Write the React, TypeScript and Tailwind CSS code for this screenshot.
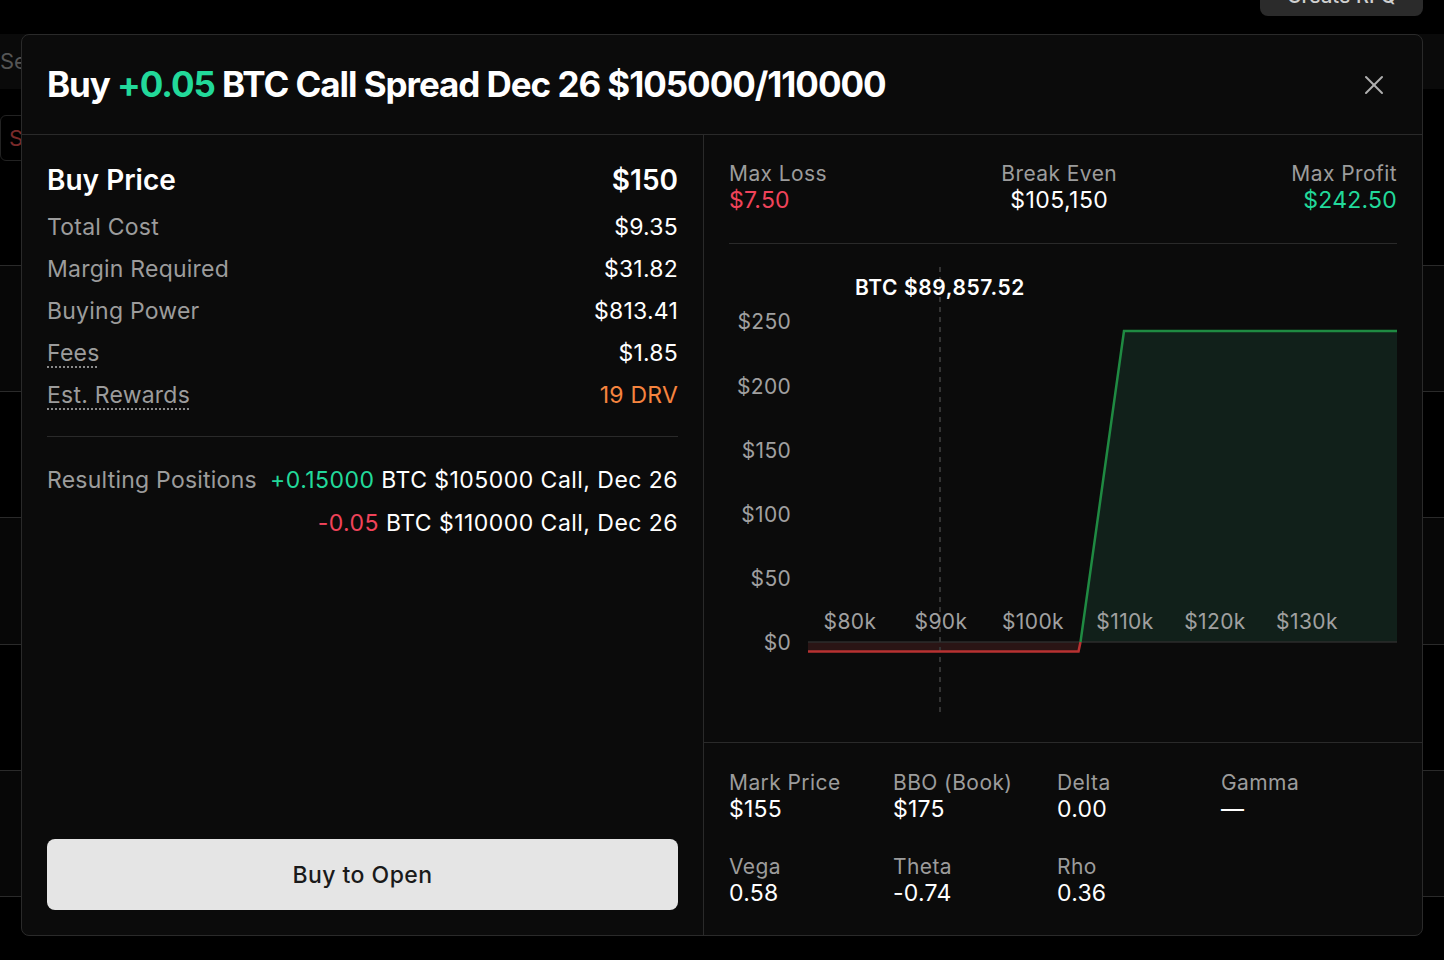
import { X } from "lucide-react";

function Row({ label, value, dotted, valueClass }: { label: string; value: string; dotted?: boolean; valueClass?: string }) {
  return (
    <div className="flex h-[42px] items-center justify-between">
      <span
        className={
          "text-[#9c9c9c] " +
          (dotted ? "underline decoration-dotted decoration-[#8a8a8a] decoration-2 underline-offset-[6px]" : "")
        }
      >
        {label}
      </span>
      <span className={valueClass ?? "text-white"}>{value}</span>
    </div>
  );
}

function Stat({ label, value }: { label: string; value: string }) {
  return (
    <div className="flex flex-col leading-[27px]">
      <span className="text-[21px] tracking-[0.02em] text-[#9c9c9c]">{label}</span>
      <span className="text-[23px] tracking-[0.01em] text-white">{value}</span>
    </div>
  );
}

function Chart() {
  const yLabels = [
    { t: "$250", y: 84 },
    { t: "$200", y: 149 },
    { t: "$150", y: 213 },
    { t: "$100", y: 277 },
    { t: "$50", y: 341 },
    { t: "$0", y: 405 },
  ];
  const xLabels = [
    { t: "$80k", x: 146 },
    { t: "$90k", x: 237 },
    { t: "$100k", x: 329 },
    { t: "$110k", x: 421 },
    { t: "$120k", x: 511 },
    { t: "$130k", x: 603 },
  ];
  return (
    <svg width="718" height="499" viewBox="0 0 718 499" className="block">
      <path d="M376 398 L420 87 H693 V398 Z" fill="#11201a" />
      <rect x="104" y="398" width="272" height="9.5" fill="#2a1515" />
      <line x1="104" y1="398" x2="693" y2="398" stroke="#2c2c2c" strokeWidth="1.5" />
      <line x1="236" y1="23" x2="236" y2="472" stroke="#333" strokeWidth="2" strokeDasharray="5 5" />
      <path d="M104 407.5 H374.5 L376.5 398" fill="none" stroke="#b83232" strokeWidth="2.5" />
      <path d="M376.5 398 L420 87 H693" fill="none" stroke="#1f8a42" strokeWidth="2.5" />
      <text
        x="236"
        y="51"
        textAnchor="middle"
        fill="#fff"
        fontSize="21"
        fontWeight="600"
        letterSpacing="0.6"
        fontFamily="Inter, sans-serif"
      >
        BTC $89,857.52
      </text>
      {yLabels.map((l) => (
        <text key={l.t} x="87" y={l.y + 1} textAnchor="end" fill="#a0a0a0" fontSize="21" letterSpacing="0.3" fontFamily="Inter, sans-serif">
          {l.t}
        </text>
      ))}
      {xLabels.map((l) => (
        <text key={l.t} x={l.x} y="385" textAnchor="middle" fill="#a0a0a0" fontSize="21" letterSpacing="0.4" fontFamily="Inter, sans-serif">
          {l.t}
        </text>
      ))}
    </svg>
  );
}

export default function App() {
  return (
    <div className="relative h-[960px] w-[1444px] overflow-hidden bg-black font-[Inter,sans-serif]">
      {/* background page */}
      <div className="flex flex-col">
        <div className="flex h-[34px] justify-end pr-[21px]">
          <div className="-mt-[24px] flex h-[40px] w-[163px] items-start justify-center rounded-lg bg-[#2b2b2b] pt-[5px] text-[20px] font-medium text-[#d0d0d0]">
            Create RFQ
          </div>
        </div>
        <div className="flex h-[55px] items-center bg-[#0a0a0a] text-[22px] text-[#555]">Select</div>
        <div className="h-[26px]" />
        <div className="flex h-[46px] w-[80px] items-center rounded-md border border-[#222] pl-[8px] text-[22px] text-[#7a2a2a]">
          Sell
        </div>
        <div className="h-[105px] border-b border-[#2a2a2a]" />
        <div className="h-[126px] border-b border-[#2a2a2a] bg-[#070707]" />
        <div className="h-[126px] border-b border-[#2a2a2a]" />
        <div className="h-[127px] border-b border-[#2a2a2a] bg-[#070707]" />
        <div className="h-[126px] border-b border-[#2a2a2a]" />
        <div className="h-[126px] border-b border-[#2a2a2a] bg-[#070707]" />
      </div>

      {/* modal */}
      <div className="absolute left-[21px] top-[34px] flex h-[902px] w-[1402px] flex-col rounded-lg border border-[#2a2a2a] bg-[#0b0b0b]">
        <div className="flex h-[100px] shrink-0 items-center justify-between border-b border-[#2a2a2a] pl-[25px] pr-[32px]">
          <h1 className="text-[35px] font-bold tracking-[-0.03em] text-white">
            Buy <span className="text-[#22d99a]">+0.05</span> BTC Call Spread Dec 26 $105000/110000
          </h1>
          <X size={32} strokeWidth={1.5} className="text-[#b0b0b0]" />
        </div>
        <div className="flex flex-1">
          {/* left */}
          <div className="flex w-[682px] flex-col border-r border-[#2a2a2a] px-[25px] pb-[25px] pt-[29px] text-[23px] tracking-[0.01em]">
            <div className="flex h-[32px] items-center justify-between text-[28px] font-semibold tracking-normal text-white">
              <span>Buy Price</span>
              <span>$150</span>
            </div>
            <div className="mt-[10px]">
              <Row label="Total Cost" value="$9.35" />
              <Row label="Margin Required" value="$31.82" />
              <Row label="Buying Power" value="$813.41" />
              <Row label="Fees" value="$1.85" dotted />
              <Row label="Est. Rewards" value="19 DRV" dotted valueClass="text-[#f6843f]" />
            </div>
            <div className="mt-[20px] border-t border-[#2a2a2a]" />
            <div className="flex justify-between gap-[4px] whitespace-nowrap pt-[22px] leading-[43px]">
              <span className="shrink-0 text-[#9c9c9c]">Resulting Positions</span>
              <div className="flex flex-col items-end tracking-[0.02em] text-white">
                <span>
                  <span className="text-[#22d99a]">+0.15000</span> BTC $105000 Call, Dec 26
                </span>
                <span>
                  <span className="text-[#f0435a]">-0.05</span> BTC $110000 Call, Dec 26
                </span>
              </div>
            </div>
            <button className="mt-auto flex h-[71px] w-full items-center justify-center rounded-lg bg-[#e5e5e5] pt-[2px] text-[23px] font-medium tracking-[0.02em] text-[#1a1a1a]">
              Buy to Open
            </button>
          </div>

          {/* right */}
          <div className="flex flex-1 flex-col">
            <div className="px-[25px]">
              <div className="flex justify-between border-b border-[#2a2a2a] pb-[29px] pt-[25px] leading-[27px]">
                <div className="flex flex-col">
                  <span className="text-[21px] tracking-[0.02em] text-[#9c9c9c]">Max Loss</span>
                  <span className="text-[23px] tracking-[0.01em] text-[#f0435a]">$7.50</span>
                </div>
                <div className="flex flex-col items-center">
                  <span className="text-[21px] tracking-[0.02em] text-[#9c9c9c]">Break Even</span>
                  <span className="text-[23px] tracking-[0.02em] text-white">$105,150</span>
                </div>
                <div className="flex flex-col items-end">
                  <span className="text-[21px] tracking-[0.02em] text-[#9c9c9c]">Max Profit</span>
                  <span className="text-[23px] tracking-[0.01em] text-[#22d99a]">$242.50</span>
                </div>
              </div>
            </div>
            <div className="h-[499px] border-b border-[#2a2a2a]">
              <Chart />
            </div>
            <div className="grid grid-cols-[164px_164px_164px_1fr] gap-y-[30px] px-[25px] pt-[26px]">
              <Stat label="Mark Price" value="$155" />
              <Stat label="BBO (Book)" value="$175" />
              <Stat label="Delta" value="0.00" />
              <Stat label="Gamma" value="—" />
              <Stat label="Vega" value="0.58" />
              <Stat label="Theta" value="-0.74" />
              <Stat label="Rho" value="0.36" />
            </div>
          </div>
        </div>
      </div>
    </div>
  );
}
